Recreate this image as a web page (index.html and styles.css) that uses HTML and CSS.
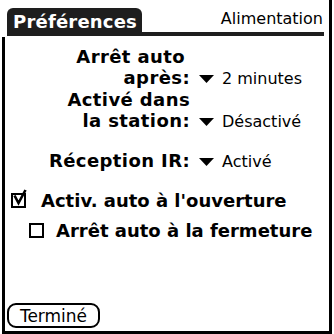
FILE: index.html
```html
<!DOCTYPE html>
<html lang="fr">
<head>
<meta charset="utf-8">
<title>Préférences</title>
<link rel="stylesheet" href="styles.css">
</head>
<body>
<div class="screen">
  <div class="titlebar">
    <div class="tab">Préférences</div>
    <div class="rule"><span class="category">Alimentation</span></div>
  </div>
  <div class="frame">
    <div class="fields">
      <div class="label"><span class="indent">Arrêt auto</span><br>après:</div>
      <div class="value"><svg class="arrow" width="15" height="8" viewBox="0 0 15 8"><path d="M0 0H15L7.5 8Z" fill="#000"/></svg>2 minutes</div>
      <div class="label">Activé dans<br>la station:</div>
      <div class="value"><svg class="arrow" width="15" height="8" viewBox="0 0 15 8"><path d="M0 0H15L7.5 8Z" fill="#000"/></svg>Désactivé</div>
      <div class="label ir">Réception IR:</div>
      <div class="value ir"><svg class="arrow" width="15" height="8" viewBox="0 0 15 8"><path d="M0 0H15L7.5 8Z" fill="#000"/></svg>Activé</div>
    </div>
    <div class="check first">
      <svg class="box" width="17" height="19" viewBox="0 0 17 19"><rect x="1" y="5" width="13" height="13" fill="none" stroke="#000" stroke-width="2"/><path d="M3.5 6.5L7.5 14L14.5 1" fill="none" stroke="#000" stroke-width="2.6"/></svg>
      <span>Activ. auto à l'ouverture</span>
    </div>
    <div class="check second">
      <svg class="box" width="17" height="19" viewBox="0 0 17 19"><rect x="1" y="5" width="13" height="13" fill="none" stroke="#000" stroke-width="2"/></svg>
      <span>Arrêt auto à la fermeture</span>
    </div>
    <div class="spacer"></div>
    <div class="buttons"><button class="done">Terminé</button></div>
  </div>
</div>
</body>
</html>
```
FILE: styles.css
```css
html, body {
  margin: 0;
  padding: 0;
  background: #fff;
}
.screen {
  width: 334px;
  height: 334px;
  display: flex;
  flex-direction: column;
  font-family: "DejaVu Sans", sans-serif;
  color: #000;
  overflow: hidden;
}
.titlebar {
  height: 37px;
  box-sizing: border-box;
  padding: 8px 0 0 7px;
  display: flex;
  align-items: flex-end;
  border-right: 3px solid #000;
  margin-right: 2px;
}
.tab {
  height: 28px;
  box-sizing: border-box;
  background: #1e1e1e;
  color: #fff;
  font-weight: bold;
  font-size: 18px;
  letter-spacing: 0.2px;
  line-height: 28px;
  padding: 0 5px 0 6px;
  border-radius: 6px 6px 0 0;
  margin-bottom: 1px;
}
.rule {
  flex: 1;
  height: 29px;
  box-sizing: border-box;
  border-bottom: 4px solid #1e1e1e;
  margin-bottom: 1px;
  margin-right: 5px;
  display: flex;
  justify-content: flex-end;
  align-items: flex-end;
}
.category {
  font-size: 16px;
  line-height: 20px;
  padding-right: 1px;
  margin-bottom: 3px;
}
.frame {
  flex: 1;
  margin-left: 2px;
  margin-right: 2px;
  border: 3px solid #000;
  border-top: none;
  display: flex;
  flex-direction: column;
  padding-top: 9px;
}
.fields {
  display: grid;
  grid-template-columns: 185px auto;
  column-gap: 9px;
  align-items: last baseline;
}
.label {
  font-weight: bold;
  font-size: 18px;
  letter-spacing: 0.4px;
  line-height: 21px;
  text-align: right;
}
.indent {
  padding-right: 5px;
}
.value {
  font-size: 16px;
  line-height: 21px;
  white-space: nowrap;
}
.ir {
  margin-top: 18px;
}
.arrow {
  margin-right: 8px;
  vertical-align: 1px;
}
.check {
  display: flex;
  align-items: flex-end;
  font-weight: bold;
  font-size: 18px;
  line-height: 21px;
}
.check .box {
  flex: none;
  margin-bottom: 3px;
}
.check.first {
  margin-top: 17px;
  padding-left: 6px;
}
.check.first span {
  margin-left: 13px;
}
.check.second {
  margin-top: 8px;
  padding-left: 24px;
}
.check.second span {
  margin-left: 10px;
}
.spacer {
  flex: 1;
}
.buttons {
  padding: 0 0 3px 2px;
}
.done {
  width: 93px;
  height: 25px;
  box-sizing: border-box;
  border: 2px solid #000;
  border-radius: 9px;
  background: #fff;
  font-family: "DejaVu Sans", sans-serif;
  font-size: 17px;
  line-height: 20px;
  padding: 0;
  color: #000;
}
```
